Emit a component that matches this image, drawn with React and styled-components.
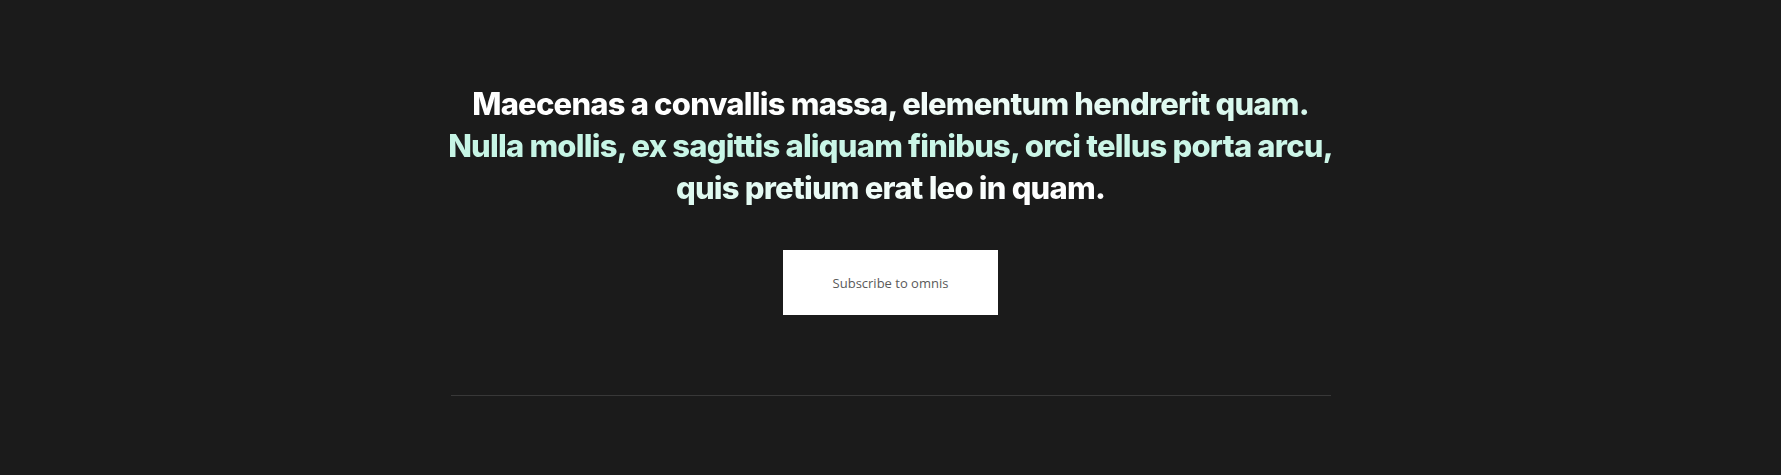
import React from 'react'
import styled, { createGlobalStyle } from 'styled-components'

const GlobalStyle = createGlobalStyle`
  html, body {
    margin: 0;
    padding: 0;
    background: #1b1b1b;
  }
  body {
    font-family: Inter, 'Liberation Sans', sans-serif;
  }
`

const Page = styled.section`
  min-height: 475px;
  background: #1b1b1b;
  padding-top: 83px;
  box-sizing: border-box;
`

const Inner = styled.div`
  width: 880px;
  margin: 0 auto;
  display: flex;
  flex-direction: column;
  align-items: center;
`

const Heading = styled.h2`
  margin: 0;
  font-family: Inter, 'Liberation Sans', sans-serif;
  font-weight: 800;
  font-size: 31px;
  line-height: 42px;
  letter-spacing: -0.8px;
  text-align: center;
  white-space: nowrap;
`

const Line = styled.span`
  display: block;
  width: fit-content;
  margin: 0 auto;
  background: ${p => p.$tint};
  -webkit-background-clip: text;
  background-clip: text;
  color: transparent;
`

const Button = styled.button`
  margin-top: 41px;
  width: 215px;
  height: 65px;
  border: 0;
  background: #fff;
  color: #5a5a5a;
  font-family: 'Open Sans', 'Liberation Sans', sans-serif;
  font-size: 13px;
  font-weight: 400;
  cursor: pointer;
`

const Divider = styled.hr`
  width: 880px;
  margin: 80px 0 0;
  border: 0;
  border-top: 1px solid #383838;
`

const lines = [
  { text: 'Maecenas a convallis massa, elementum hendrerit quam.', tint: 'linear-gradient(90deg, #ffffff 35%, #d4f7eb 100%)' },
  { text: 'Nulla mollis, ex sagittis aliquam finibus, orci tellus porta arcu,', tint: 'linear-gradient(90deg, #c6f5e5, #cdf6e8)' },
  { text: 'quis pretium erat leo in quam.', tint: 'linear-gradient(90deg, #dcf9ef 0%, #ffffff 80%)' }
]

export default function App () {
  return (
    <>
      <GlobalStyle />
      <Page>
        <Inner>
          <Heading>
            {lines.map(l => (
              <Line key={l.text} $tint={l.tint}>{l.text}</Line>
            ))}
          </Heading>
          <Button>Subscribe to omnis</Button>
          <Divider />
        </Inner>
      </Page>
    </>
  )
}
